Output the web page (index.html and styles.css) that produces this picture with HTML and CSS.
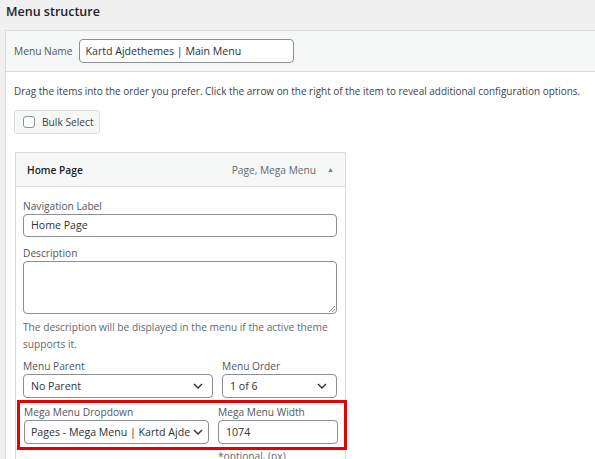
FILE: index.html
```html
<!DOCTYPE html>
<html>
<head>
<meta charset="utf-8">
<link rel="stylesheet" href="styles.css">
</head>
<body>
<h2 class="title">Menu structure</h2>
<div class="menu-box">
  <div class="menu-head">
    <label class="name-label">Menu Name</label>
    <div class="input name-input">Kartd Ajdethemes | Main Menu</div>
  </div>
  <div class="menu-body">
    <p class="drag">Drag the items into the order you prefer. Click the arrow on the right of the item to reveal additional configuration options.</p>
    <div class="bulk"><span class="check"></span>Bulk Select</div>
    <div class="item">
      <div class="item-head">
        <span class="item-title">Home Page</span>
        <span class="item-type">Page, Mega Menu</span>
        <span class="arrow">&#9650;</span>
      </div>
      <div class="item-body">
        <div class="field first">
          <div class="lbl">Navigation Label</div>
          <div class="input">Home Page</div>
        </div>
        <div class="field">
          <div class="lbl">Description</div>
          <div class="textarea">
            <svg class="grip" width="6" height="6" viewBox="0 0 6 6"><path d="M6 0L0 6M6 3L3 6" stroke="#8c8f94" stroke-width="1"/></svg>
          </div>
        </div>
        <p class="help">The description will be displayed in the menu if the active theme supports it.</p>
        <div class="row">
          <div class="col parent">
            <div class="lbl">Menu Parent</div>
            <div class="select"><span>No Parent</span><svg class="chev" width="10" height="6" viewBox="0 0 10 6"><path d="M1 1l4 4 4-4" fill="none" stroke="#2c3338" stroke-width="1.4"/></svg></div>
          </div>
          <div class="col order">
            <div class="lbl">Menu Order</div>
            <div class="select"><span>1 of 6</span><svg class="chev" width="10" height="6" viewBox="0 0 10 6"><path d="M1 1l4 4 4-4" fill="none" stroke="#2c3338" stroke-width="1.4"/></svg></div>
          </div>
        </div>
        <div class="row mega">
          <div class="col mdrop">
            <div class="lbl">Mega Menu Dropdown</div>
            <div class="select"><span class="clip">Pages - Mega Menu | Kartd Ajdethemes</span><svg class="chev" width="10" height="6" viewBox="0 0 10 6"><path d="M1 1l4 4 4-4" fill="none" stroke="#2c3338" stroke-width="1.4"/></svg></div>
          </div>
          <div class="col mwidth">
            <div class="lbl">Mega Menu Width</div>
            <div class="input">1074</div>
          </div>
        </div>
        <div class="optional">*optional, (px)</div>
      </div>
    </div>
  </div>
</div>
</body>
</html>
```
FILE: styles.css
```css
html, body {
  margin: 0;
  padding: 0;
}
body {
  background: #f0f0f1;
  font-family: "Open Sans", "Noto Sans", sans-serif;
  font-size: 10.2px;
  color: #3c434a;
  width: 595px;
  height: 459px;
  overflow: hidden;
}
.title {
  margin: 0;
  height: 30px;
  padding: 3px 0 0 6px;
  box-sizing: border-box;
  font-size: 12.5px;
  font-weight: 600;
  color: #1d2327;
  line-height: 18px;
}
.menu-box {
  margin-left: 5px;
  border: 1px solid #dcdcde;
  border-right: none;
  background: #fff;
  height: 440px;
}
.menu-head {
  background: #f6f7f7;
  border-bottom: 1px solid #dcdcde;
  display: flex;
  align-items: center;
  padding: 0 8px;
  height: 41px;
  box-sizing: border-box;
}
.name-label {
  color: #50575e;
  margin-right: 6px;
}
.input, .select, .textarea {
  border: 1px solid #8c8f94;
  border-radius: 4px;
  background: #fff;
  box-sizing: border-box;
  color: #2c3338;
  font-size: 10.6px;
}
.input {
  height: 24px;
  line-height: 22px;
  padding: 0 7px;
}
.name-input {
  width: 215px;
  height: 24px;
  padding: 0 6px;
}
.menu-body {
  padding: 0 8px;
}
.drag {
  margin: 0;
  padding-top: 11px;
  line-height: 16px;
  font-size: 9.95px;
  color: #3c434a;
  white-space: nowrap;
}
.bulk {
  margin-top: 11px;
  width: 86px;
  height: 24px;
  box-sizing: border-box;
  border: 1px solid #dcdcde;
  border-radius: 3px;
  background: #f6f7f7;
  display: flex;
  align-items: center;
  padding-left: 8px;
  color: #3c434a;
}
.check {
  width: 12px;
  height: 12px;
  box-sizing: border-box;
  border: 1px solid #8c8f94;
  border-radius: 3px;
  background: #fff;
  margin-right: 7px;
}
.item {
  margin-top: 18px;
  margin-left: 1px;
  width: 331px;
  border: 1px solid #dcdcde;
  box-sizing: border-box;
}
.item-head {
  height: 33px;
  background: #f6f7f7;
  border-bottom: 1px solid #dcdcde;
  display: flex;
  align-items: center;
  padding: 0 11px 0 11px;
}
.item-title {
  font-weight: 600;
  color: #1d2327;
  flex: 1;
}
.item-type {
  color: #646970;
}
.arrow {
  margin-left: 11px;
  font-size: 7px;
  color: #787c82;
}
.item-body {
  padding: 0 8px 0 7px;
}
.lbl {
  color: #50575e;
  line-height: 16px;
}
.field.first {
  padding-top: 11px;
  margin-top: 0;
}
.field {
  margin-top: 8px;
}
.field .input { height: 23px; line-height: 21px; }
.textarea {
  height: 53px;
  position: relative;
}
.grip {
  position: absolute;
  right: 1px;
  bottom: 1px;
}
.help {
  margin: 5px 0 0;
  color: #646970;
  line-height: 17px;
}
.row {
  display: flex;
  gap: 9px;
  margin-top: 5px;
}
.select {
  height: 24px;
  display: flex;
  align-items: center;
  padding: 0 9px 0 7px;
}
.select span {
  flex: 1;
  overflow: hidden;
  white-space: nowrap;
}
.chev {
  flex: none;
  margin-left: 3px;
}
.parent { width: 190px; }
.order { width: 115px; }
.mega {
  margin: 2px -10px 0 -6px;
  border: 3px solid #e60000;
  padding: 1px 6px 3px 4px;
  gap: 9px;
}
.mdrop { width: 185px; }
.mdrop .select { padding-right: 5px; padding-left: 6px; }
.mwidth { width: 120px; }
.optional {
  margin-left: 195px;
  color: #646970;
  line-height: 12px;
}
```
